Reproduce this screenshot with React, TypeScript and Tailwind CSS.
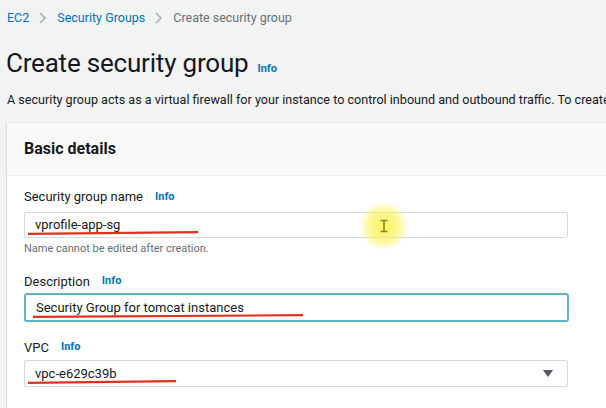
import React from 'react';

function Info({ className = 'ml-3' }: { className?: string }) {
  return <span className={`${className} text-[11px] font-bold text-[#0073bb]`}>Info</span>;
}

function Chevron() {
  return (
    <svg width="10" height="14" viewBox="0 0 10 14" className="mx-[9px]">
      <path d="M2 2l5 5-5 5" fill="none" stroke="#a6b0b2" strokeWidth="1.6" />
    </svg>
  );
}

function RedMark({ w, className = '' }: { w: number; className?: string }) {
  return (
    <svg width={w} height="4" viewBox={`0 0 ${w} 4`} className={`absolute ${className}`}>
      <path d={`M0 2.8 L${w} 1.2`} stroke="#e0301e" strokeWidth="2.2" strokeLinecap="round" />
    </svg>
  );
}

export default function App() {
  return (
    <div className="w-[606px] h-[408px] overflow-hidden bg-[#f2f3f3] font-['Roboto',sans-serif] text-[#16191f]">
      <div className="flex items-center h-[36px] pl-[7px] text-[12.5px]">
        <span className="text-[#0073bb]">EC2</span>
        <Chevron />
        <span className="text-[#0073bb]">Security Groups</span>
        <Chevron />
        <span className="text-[#687078]">Create security group</span>
      </div>

      <div className="flex items-baseline pl-[6px] mt-[9px] h-[36px]">
        <h1 className="text-[26px] leading-[36px] font-normal tracking-[-0.2px]">Create security group</h1>
        <Info className="ml-[9px]" />
      </div>

      <p className="pl-[7px] mt-[10px] text-[12.6px] whitespace-nowrap text-[#16191f]">
        A security group acts as a virtual firewall for your instance to control inbound and outbound traffic. To create a new security group, complete the fields below.
      </p>

      <div className="ml-[7px] mt-[13px] w-[620px] h-[290px] bg-white shadow-[0_1px_2px_rgba(0,28,36,0.3),1px_1px_1px_rgba(0,28,36,0.12)]">
        <div className="h-[53px] flex items-center pl-[17px] bg-[#fafafa] border-b border-[#eaeded]">
          <h2 className="text-[16px] font-bold">Basic details</h2>
        </div>

        <div className="pl-[17px] pr-[32px]">
          <div className="flex items-center mt-[12px] h-[18px] text-[13px]">
            <span>Security group name</span>
            <Info />
          </div>
          <div className="relative mt-[6px] w-[544px] h-[26px] border border-[#d5dbdb] rounded-[2px] flex items-center pl-[10px] text-[13px] bg-white">
            vprofile-app-sg
            <RedMark w={170} className="left-[3px] top-[18px]" />
            <div className="absolute left-[334px] top-[-12px] w-[50px] h-[50px] rounded-full bg-[radial-gradient(circle,rgba(250,240,60,0.85)_0%,rgba(250,240,60,0.5)_45%,rgba(250,240,60,0)_70%)] flex items-center justify-center">
              <svg width="10" height="14" viewBox="0 0 10 14">
                <path d="M1.5 1.5h7M5 1.5v11M1.5 12.5h7" stroke="#8a8520" strokeWidth="1.6" fill="none" />
              </svg>
            </div>
          </div>
          <div className="mt-[3px] text-[11px] text-[#687078]">Name cannot be edited after creation.</div>

          <div className="flex items-center mt-[15px] h-[18px] text-[13px]">
            <span>Description</span>
            <Info />
          </div>
          <div className="relative mt-[3px] w-[545px] h-[29px] border-2 border-[#5fb3c2] rounded-[3px] flex items-center pl-[10px] text-[13px] bg-white">
            Security Group for tomcat instances
            <RedMark w={270} className="left-[7px] top-[19px]" />
          </div>

          <div className="flex items-center mt-[16px] h-[18px] text-[13px]">
            <span>VPC</span>
            <Info />
          </div>
          <div className="relative mt-[4px] w-[544px] h-[27px] border border-[#d5dbdb] rounded-[2px] flex items-center justify-between pl-[10px] pr-[14px] text-[13px] bg-white">
            <span>vpc-e629c39b</span>
            <svg width="10" height="7" viewBox="0 0 10 7">
              <path d="M0 0h10L5 7z" fill="#545b64" />
            </svg>
            <RedMark w={148} className="left-[3px] top-[19px]" />
          </div>
        </div>
      </div>
    </div>
  );
}
